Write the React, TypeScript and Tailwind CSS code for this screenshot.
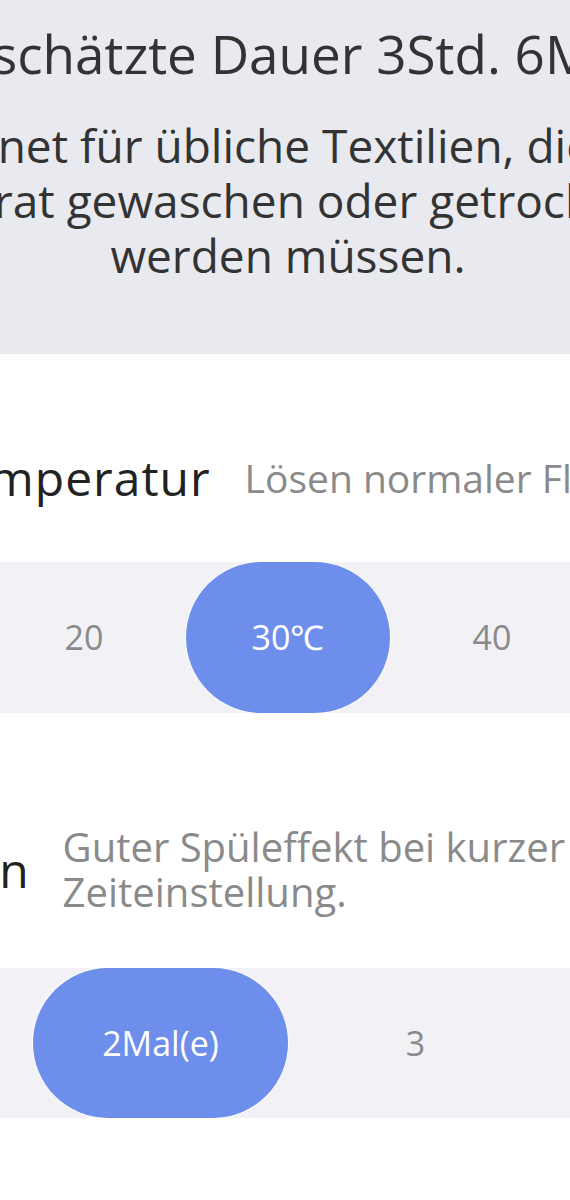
const tempOptions = ['Kalt', '20', '30℃', '40', '60'];
const rinseOptions = ['1', '2Mal(e)', '3', '4'];

type TOptionBar = {
    options: string[];
    selected: number;
    cols: string;
    height: string;
}

const OptionBar = ({ options, selected, cols, height }: TOptionBar) => {
    return <div className={`grid ${cols} ${height} bg-[#f2f2f6]`}>
        {options.map((opt, i) => (
            <div key={opt} className="flex items-center justify-center">
                {i === selected
                    ? <div className="flex items-center justify-center w-full h-full rounded-full bg-[#6e8eeb] ring-1 ring-white/70 text-white text-[34px]">{opt}</div>
                    : <span className="text-[34px] text-[#8a8a8a]">{opt}</span>}
            </div>
        ))}
    </div>
}

export default function App() {
    return <div className="w-[570px] h-[1200px] overflow-hidden bg-white font-['Open_Sans',sans-serif]">
        <div className="w-[1020px] ml-[-222px]">
            {/* program summary */}
            <div className="flex flex-col items-center bg-[#e8eaef] pt-[22px] pb-[71px] text-[#333333]">
                <div className="text-[53px] leading-[64px] whitespace-nowrap">Geschätzte Dauer 3Std. 6Min.</div>
                <div className="mt-[32px] text-[46px] leading-[55px] text-center whitespace-nowrap">
                    <div className="pr-[108px]">Geeignet für übliche Textilien, die</div>
                    <div className="pr-[24px]">separat gewaschen oder getrocknet</div>
                    <div>werden müssen.</div>
                </div>
            </div>

            {/* temperature */}
            <div className="flex items-center gap-[34px] pl-[14px] mt-[96px]">
                <span className="text-[48px] leading-[55px] tracking-[1px] text-[#222222] whitespace-nowrap">Waschtemperatur</span>
                <span className="text-[39px] leading-[45px] text-[#8a8a8a] whitespace-nowrap">Lösen normaler Flecken</span>
            </div>
            <div className="mt-[57px]">
                <OptionBar options={tempOptions} selected={2} cols="grid-cols-5" height="h-[151px]" />
            </div>

            {/* rinse */}
            <div className="flex items-center gap-[33px] pl-[4px] mt-[111px]">
                <span className="text-[48px] leading-[55px] tracking-[1px] text-[#222222] whitespace-nowrap">Spülungen</span>
                <span className="text-[40px] leading-[45px] text-[#8a8a8a] whitespace-nowrap">Guter Spüleffekt bei kurzer<br />Zeiteinstellung.</span>
            </div>
            <div className="mt-[54px]">
                <OptionBar options={rinseOptions} selected={1} cols="grid-cols-4" height="h-[150px]" />
            </div>
        </div>
    </div>
}
